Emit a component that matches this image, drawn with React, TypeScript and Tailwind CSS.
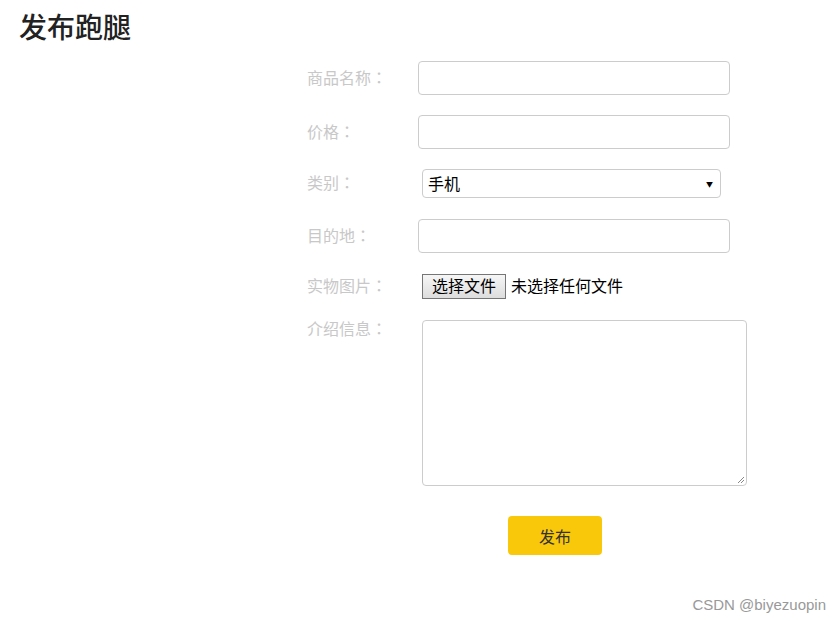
import React from "react";

const cjk = { fontFamily: '"Microsoft YaHei", "Noto Sans CJK SC", sans-serif' };
const tc = { fontFamily: '"Noto Sans CJK TC", sans-serif' };

function Label({ text }: { text: string }) {
  return (
    <div className="w-[111px] shrink-0 pb-[3px] text-[16px] leading-[18px] text-[#c8c8c8]">
      {text}
      <span style={tc}>：</span>
    </div>
  );
}

export default function App() {
  return (
    <div className="relative h-[621px] w-[840px] bg-white text-[#222]" style={cjk}>
      <h2 className="pl-[19px] pt-[7px] text-[28px] font-medium leading-[38px] text-[#222]">发布跑腿</h2>
      <form className="ml-[307px] mt-[16px] flex w-[440px] flex-col">
        <div className="flex h-[34px] items-center">
          <Label text="商品名称" />
          <input className="h-[34px] w-[312px] rounded-[4px] border border-[#cccccc] px-2 outline-none" />
        </div>
        <div className="mt-[20px] flex h-[34px] items-center">
          <Label text="价格" />
          <input className="h-[34px] w-[312px] rounded-[4px] border border-[#cccccc] px-2 outline-none" />
        </div>
        <div className="mt-[20px] flex h-[29px] items-center">
          <Label text="类别" />
          <div className="relative ml-[4px] flex h-[29px] w-[299px] items-center rounded-[4px] border border-[#cccccc] pb-[1px] pl-[5px] text-[16px] text-black">
            手机
            <span className="absolute right-[7px] top-[10px] text-[7px] leading-[8px] text-black">▼</span>
          </div>
        </div>
        <div className="mt-[21px] flex h-[34px] items-center">
          <Label text="目的地" />
          <input className="h-[34px] w-[312px] rounded-[4px] border border-[#cccccc] px-2 outline-none" />
        </div>
        <div className="mt-[21px] flex h-[25px] items-center">
          <Label text="实物图片" />
          <div className="ml-[4px] flex items-center text-[16px] leading-[20px] text-black">
            <span className="flex h-[25px] w-[84px] items-center justify-center border border-[#767676] bg-gradient-to-b from-[#f6f6f6] to-[#dddddd] pb-[3px]">
              选择文件
            </span>
            <span className="ml-[5px] pb-[3px]">未选择任何文件</span>
          </div>
        </div>
        <div className="mt-[21px] flex">
          <div className="-mt-[1px] w-[111px] shrink-0">
            <Label text="介绍信息" />
          </div>
          <div className="relative ml-[4px] h-[166px] w-[325px] rounded-[4px] border border-[#cccccc]">
            <svg className="absolute bottom-[1px] right-[1px]" width="8" height="8" viewBox="0 0 8 8">
              <path d="M7 1 L1 7 M7 4 L4 7" stroke="#888" strokeWidth="1" />
            </svg>
          </div>
        </div>
        <div className="mt-[30px] flex">
          <button
            type="button"
            className="ml-[201px] h-[39px] w-[94px] rounded-[4px] bg-[#fac80b] text-[16px] text-[#333]"
          >
            发布
          </button>
        </div>
      </form>
      <div
        className="absolute right-[14px] top-[594px] text-[15px] text-[#999]"
        style={{ fontFamily: '"Liberation Sans", Arial, sans-serif' }}
      >
        CSDN @biyezuopin
      </div>
    </div>
  );
}
